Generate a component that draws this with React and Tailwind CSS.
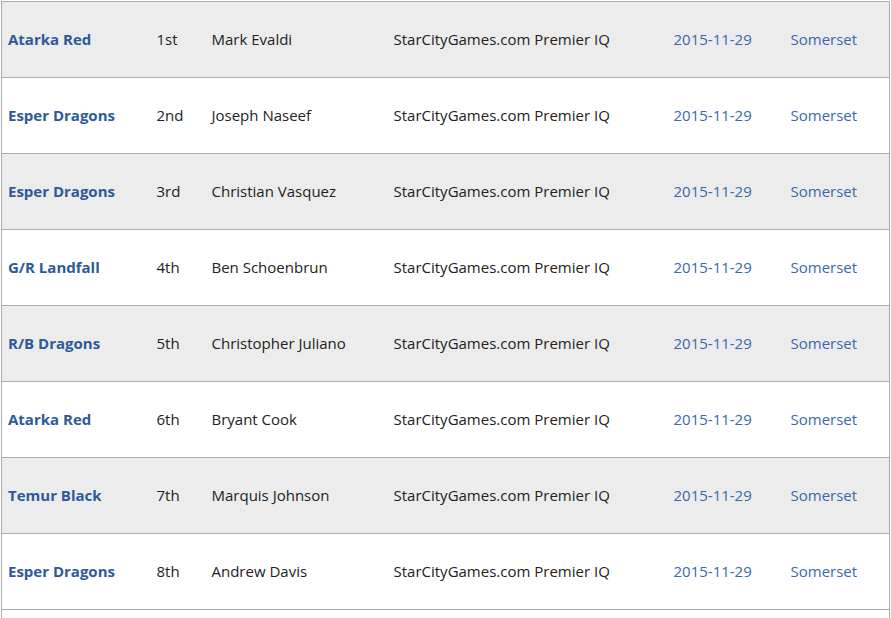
import React from "react";

const rows = [
  ["Atarka Red", "1st", "Mark Evaldi"],
  ["Esper Dragons", "2nd", "Joseph Naseef"],
  ["Esper Dragons", "3rd", "Christian Vasquez"],
  ["G/R Landfall", "4th", "Ben Schoenbrun"],
  ["R/B Dragons", "5th", "Christopher Juliano"],
  ["Atarka Red", "6th", "Bryant Cook"],
  ["Temur Black", "7th", "Marquis Johnson"],
  ["Esper Dragons", "8th", "Andrew Davis"],
];

export default function App() {
  return (
    <div className="w-[891px] h-[618px] overflow-hidden bg-white pt-px pl-px" style={{ fontFamily: '"Open Sans", sans-serif' }}>
      <table className="table-fixed border-collapse w-[889px] text-[15px] text-[#222]">
        <colgroup>
          <col className="w-[149px]" />
          <col className="w-[55px]" />
          <col className="w-[182px]" />
          <col className="w-[280px]" />
          <col className="w-[117px]" />
          <col />
        </colgroup>
        <tbody>
          {rows.map((r, i) => (
            <tr key={i} className={i % 2 === 0 ? "bg-[#ececec]" : "bg-white"}>
              <td className="h-[76px] border-y border-l border-[#ababab] pl-[6px] font-bold text-[#2d5a99] whitespace-nowrap">{r[0]}</td>
              <td className="border-y border-[#ababab] pl-[6px] whitespace-nowrap">{r[1]}</td>
              <td className="border-y border-[#ababab] pl-[6px] whitespace-nowrap">{r[2]}</td>
              <td className="border-y border-[#ababab] pl-[6px] whitespace-nowrap">StarCityGames.com Premier IQ</td>
              <td className="border-y border-[#ababab] pl-[6px] text-[#3a68ab] whitespace-nowrap">2015-11-29</td>
              <td className="border-y border-r border-[#ababab] pl-[6px] text-[#3a68ab] whitespace-nowrap">Somerset</td>
            </tr>
          ))}
          <tr className="bg-white">
            <td className="h-[76px] border-y border-l border-[#ababab]"></td>
            <td className="border-y border-[#ababab]"></td>
            <td className="border-y border-[#ababab]"></td>
            <td className="border-y border-[#ababab]"></td>
            <td className="border-y border-[#ababab]"></td>
            <td className="border-y border-r border-[#ababab]"></td>
          </tr>
        </tbody>
      </table>
    </div>
  );
}
